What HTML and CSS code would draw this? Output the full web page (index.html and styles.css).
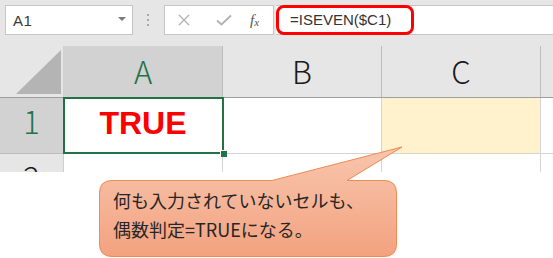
FILE: index.html
```
<!DOCTYPE html>
<html lang="ja">
<head>
<meta charset="utf-8">
<link rel="stylesheet" href="styles.css">
</head>
<body>
<div class="sheet">
  <div class="toolbar">
    <div class="namebox"><span class="name">A1</span><span class="caret"></span></div>
    <div class="grip"><i></i><i></i><i></i></div>
    <div class="fxbox">
      <svg class="ico" width="12" height="12" viewBox="0 0 12 12"><path d="M1 1L11 11M11 1L1 11" stroke="#b3b3b3" stroke-width="1.4" fill="none"/></svg>
      <svg class="ico check" width="16" height="12" viewBox="0 0 16 12"><path d="M1 6.5L5.5 10.5L15 1.5" stroke="#b3b3b3" stroke-width="2" fill="none"/></svg>
      <span class="fx">f<sub>x</sub></span>
    </div>
    <div class="formula">
      <div class="hl">=ISEVEN($C1)</div>
    </div>
  </div>
  <div class="hrow">
    <div class="corner"><svg width="63" height="51" viewBox="0 0 63 51"><path d="M16 48H61V4Z" fill="#b4b4b4"/></svg></div>
    <div class="ch sel">A</div>
    <div class="ch">B</div>
    <div class="ch">C</div>
    <div class="ch last"></div>
  </div>
  <div class="row r1">
    <div class="rh sel">1</div>
    <div class="cell a1">TRUE<span class="frame"></span><span class="handle"></span></div>
    <div class="cell"></div>
    <div class="cell c1"></div>
    <div class="cell last"></div>
  </div>
  <div class="row r2">
    <div class="rh">2</div>
    <div class="cell"></div>
    <div class="cell"></div>
    <div class="cell"></div>
    <div class="cell last"></div>
  </div>
</div>
<svg class="callout" width="553" height="258" viewBox="0 0 553 258">
  <defs>
    <linearGradient id="g" x1="0" y1="147" x2="0" y2="256" gradientUnits="userSpaceOnUse">
      <stop offset="0" stop-color="#f8c6ae"/>
      <stop offset="1" stop-color="#f3a27f"/>
    </linearGradient>
  </defs>
  <path d="M112 180.5H272L402 147L347 180.5H384Q396.5 180.5 396.5 193V244Q396.5 256.5 384 256.5H112Q99.5 256.5 99.5 244V193Q99.5 180.5 112 180.5Z" fill="url(#g)" stroke="#ee8a52" stroke-width="1"/>
</svg>
<div class="note">何も入力されていないセルも、<br>偶数判定=TRUEになる。</div>
</body>
</html>
```
FILE: styles.css
```
html, body {
  margin: 0;
  padding: 0;
  background: #ffffff;
}
body {
  width: 553px;
  height: 258px;
  overflow: hidden;
  position: relative;
  font-family: "Liberation Sans", "Noto Sans CJK JP", sans-serif;
}
.sheet {
  height: 172px;
  overflow: hidden;
  background: #e6e6e6;
  padding-top: 5px;
  box-sizing: border-box;
}
.toolbar {
  display: flex;
  height: 30px;
  align-items: stretch;
}
.namebox {
  margin-left: 5px;
  width: 128px;
  box-sizing: border-box;
  border: 1px solid #c6c6c6;
  background: #fff;
  display: flex;
  align-items: center;
  justify-content: space-between;
  padding: 0 6px 0 7px;
}
.name {
  font-size: 15px;
  color: #3a3a3a;
  letter-spacing: 0.5px;
}
.caret {
  width: 0;
  height: 0;
  border-left: 4px solid transparent;
  border-right: 4px solid transparent;
  border-top: 4px solid #7a7a7a;
  margin-top: -2px;
}
.grip {
  width: 30px;
  display: flex;
  flex-direction: column;
  align-items: center;
  justify-content: center;
  gap: 3px;
  padding-right: 1px;
}
.grip i {
  display: block;
  width: 2px;
  height: 2px;
  background: #a8a8a8;
}
.fxbox {
  width: 110px;
  box-sizing: border-box;
  border: 1px solid #c6c6c6;
  background: #fff;
  display: flex;
  align-items: center;
  padding-left: 13px;
  gap: 22px;
}
.ico { display: block; }
.check { margin-left: 4px; margin-right: -3px; }
.fx {
  font-family: "Liberation Serif", serif;
  font-style: italic;
  font-size: 15px;
  color: #555;
  margin-left: -1px;
}
.fx sub {
  font-size: 11px;
  vertical-align: 0;
  position: relative;
  top: 1px;
}
.formula {
  flex: 1;
  margin-left: 2px;
  box-sizing: border-box;
  border-top: 1px solid #c6c6c6;
  border-bottom: 1px solid #c6c6c6;
  background: #fff;
  display: flex;
}
.hl {
  width: 138px;
  height: 30px;
  margin: -1px 0;
  box-sizing: border-box;
  border: 3px solid #ff0000;
  border-radius: 8px;
  font-size: 15px;
  color: #333;
  padding-left: 11px;
  line-height: 23px;
}
.hrow {
  margin-top: 11px;
  display: flex;
  height: 52px;
  box-sizing: border-box;
  border-bottom: 1px solid #9e9e9e;
}
.corner {
  width: 64px;
  box-sizing: border-box;
  border-right: 1px solid #d0d0d0;
}
.corner svg { display: block; }
.ch {
  width: 159px;
  box-sizing: border-box;
  border-right: 1px solid #bdbdbd;
  display: flex;
  justify-content: center;
  align-items: center;
  font-family: "Noto Sans CJK JP", "Roboto", sans-serif;
  font-weight: 300;
  font-size: 31px;
  color: #1a1a1a;
  padding-bottom: 2px;
}
.ch.sel {
  background: #d2d2d2;
  color: #217346;
}
.ch.last { flex: 1; border-right: 0; }
.row {
  display: flex;
}
.r1 { height: 56px; }
.r2 { height: 40px; }
.rh {
  width: 64px;
  box-sizing: border-box;
  border-right: 1px solid #d0d0d0;
  border-bottom: 1px solid #bdbdbd;
  display: flex;
  justify-content: center;
  font-family: "Noto Sans CJK JP", "Roboto", sans-serif;
  font-weight: 300;
  font-size: 31px;
  line-height: 46px;
  color: #1a1a1a;
}
.rh.sel {
  background: #d2d2d2;
  color: #217346;
}
.r2 .rh { line-height: 40px; padding-top: 3px; }
.cell {
  width: 159px;
  box-sizing: border-box;
  background: #fff;
  border-right: 1px solid #d4d4d4;
  border-bottom: 1px solid #d4d4d4;
}
.cell.last { flex: 1; border-right: 0; }
.c1 { background: #fff2cc; }
.a1 {
  position: relative;
  display: flex;
  justify-content: center;
  align-items: center;
  padding-bottom: 4px;
  font-weight: bold;
  font-size: 32px;
  color: #ff0000;
}
.frame {
  position: absolute;
  left: -1px;
  top: -1px;
  width: 161px;
  height: 57px;
  box-sizing: border-box;
  border: 2px solid #217346;
}
.handle {
  position: absolute;
  left: 156px;
  top: 52px;
  width: 6px;
  height: 6px;
  background: #217346;
  border: 1px solid #fff;
  border-right: 0;
  border-bottom: 0;
}
.callout {
  position: absolute;
  left: 0;
  top: 0;
}
.note {
  position: absolute;
  left: 113px;
  top: 186px;
  font-family: "Noto Sans CJK JP", sans-serif;
  font-size: 18px;
  line-height: 29px;
  color: #262626;
  white-space: nowrap;
}
```
